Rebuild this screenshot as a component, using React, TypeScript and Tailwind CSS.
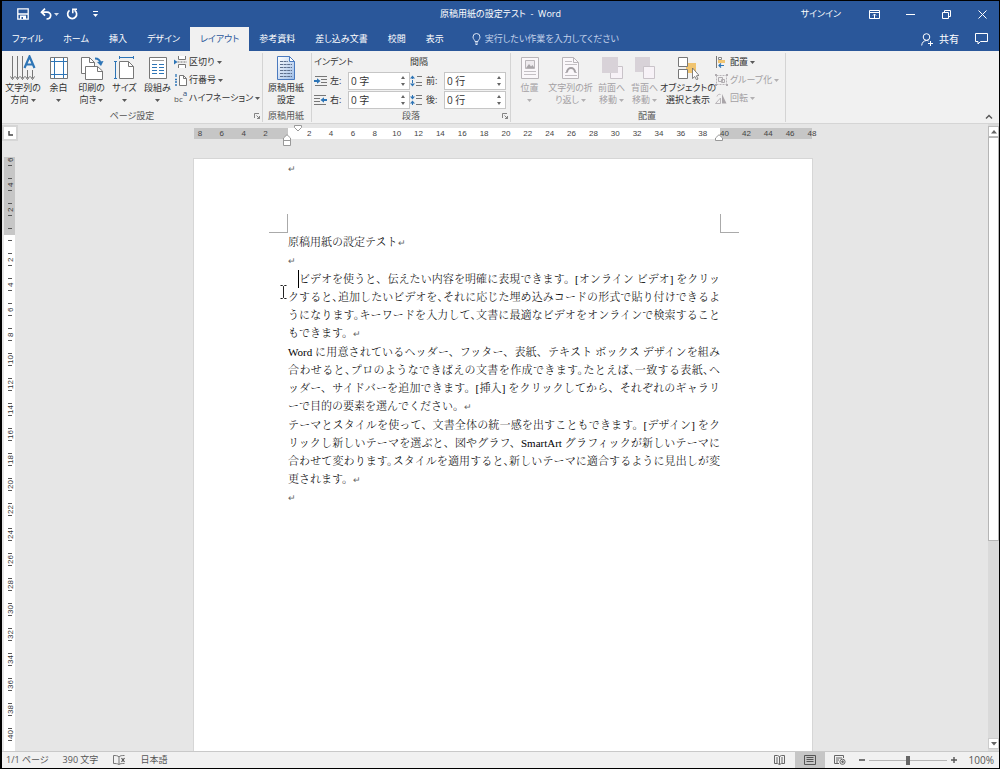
import React from 'react';

type IconProps = { children: React.ReactNode; w: number; h: number };

function Svg({ children, w, h }: IconProps) {
  return (
    <svg width={w} height={h} viewBox={`0 0 ${w} ${h}`} fill="none" aria-hidden="true" className="block shrink-0">
      {children}
    </svg>
  );
}

function Drop() {
  return (
    <svg width="5" height="3" viewBox="0 0 5 3" aria-hidden="true" className="ml-0.5 inline-block shrink-0 align-middle">
      <path d="M0 0h5L2.500 3z" fill="currentColor" opacity=".8" />
    </svg>
  );
}

/* ---------- ribbon icons ---------- */

const TextDirectionIcon = () => (
  <Svg w={26} h={26}>
    <path d="M2.500 1v22M7.500 1v22M12.500 1v22M17.500 15v8M22.500 15v8" stroke="#777" />
    <path d="M.5 21.500l2 3 2-3M5.500 21.500l2 3 2-3M10.500 21.500l2 3 2-3M15.500 21.500l2 3 2-3M20.500 21.500l2 3 2-3" stroke="#666" />
    <path d="M14.500 13L19.500 1.500 24.500 13M16 9.500h7" stroke="#2e75b6" strokeWidth="2.200" />
  </Svg>
);
const MarginsIcon = () => (
  <Svg w={20} h={24}>
    <path d="M1.500 1.500h17v21h-17z" fill="#fff" stroke="#777" />
    <path d="M5.500 2v20M14.500 2v20M2 5.500h16M2 18.500h16" stroke="#2e75b6" />
  </Svg>
);
const OrientationIcon = () => (
  <Svg w={24} h={24}>
    <path d="M1.500 1.500h8l5 5v11h-13z" fill="#fff" stroke="#777" />
    <path d="M9.500 1.500v5h5" stroke="#777" />
    <path d="M5.500 10.500h12l5 4.500v8.500h-17z" fill="#fff" stroke="#777" />
    <path d="M17.500 10.500v5h5" stroke="#777" />
    <path d="M15 2.500c3 0 5 1 5.500 5" stroke="#2e75b6" strokeWidth="1.800" />
    <path d="M17 6l4 4 2.500-5z" fill="#2e75b6" />
  </Svg>
);
const SizeIcon = () => (
  <Svg w={22} h={24}>
    <path d="M5.500 5.500h9l5 5v12h-14z" fill="#fff" stroke="#777" />
    <path d="M14.500 5.500v5h5" stroke="#777" />
    <path d="M5 1.500h15M5.500 0v3M19.500 0v3M1.500 5v18M0 5.500h3M0 22.500h3" stroke="#2e75b6" />
  </Svg>
);
const ColumnsIcon = () => (
  <Svg w={20} h={24}>
    <path d="M1.500 1.500h17v21h-17z" fill="#fff" stroke="#777" />
    <path d="M4 4.500h12" stroke="#999" />
    <path d="M4 8.500h5M4 11.500h5M4 14.500h5M4 17.500h5M11 8.500h5M11 11.500h5M11 14.500h5M11 17.500h5" stroke="#2e75b6" />
  </Svg>
);
const BreaksIcon = () => (
  <Svg w={13} h={12}>
    <path d="M4.500 0v3.500h7V0M4.500 12V8.500h7V12" fill="#fff" stroke="#777" />
    <path d="M3.500 6h9.500" stroke="#777" strokeDasharray="2 1" />
    <path d="M0 3.500L3.500 6 0 8.500z" fill="#2e75b6" />
  </Svg>
);
const LineNumbersIcon = () => (
  <Svg w={13} h={12}>
    <path d="M5.500 1.500h4l3 3v7h-7z" fill="#fff" stroke="#777" />
    <path d="M9.500 1.500v3h3" stroke="#777" />
    <path d="M2 0v3M1 5.500h2M1 8h2M1 11h2" stroke="#2e75b6" strokeWidth="1.300" />
  </Svg>
);
const GenkoIcon = () => (
  <Svg w={20} h={26}>
    <defs>
      <linearGradient id="genko" x1="0" y1="0" x2="1" y2="1">
        <stop offset="0" stopColor="#fff" />
        <stop offset="1" stopColor="#9dbce6" />
      </linearGradient>
    </defs>
    <path d="M1.500 1.500h12l5 5v18h-17z" fill="url(#genko)" stroke="#4a7abf" />
    <path d="M13.500 1.500v5h5z" fill="#fff" stroke="#4a7abf" />
    <path d="M4 6.500h8M4 9.500h12M4 12.500h12M4 15.500h12M4 18.500h12M4 21.500h12" stroke="#5d6f8c" strokeDasharray="3 .6" />
  </Svg>
);
const IndentIcon = ({ right }: { right?: boolean }) => (
  <Svg w={13} h={10}>
    <path d={right ? 'M0 .5h12M0 3.500h6M0 6.500h6M0 9.500h12' : 'M1 .5h12M7 3.500h6M7 6.500h6M1 9.500h12'} stroke="#777" />
    {right ? <path d="M13 5H8" stroke="#2e75b6" strokeWidth="2" /> : <path d="M0 5h4" stroke="#2e75b6" strokeWidth="2" />}
    <path d={right ? 'M10 2.200v5.600L6.500 5z' : 'M3 2.200v5.600L6.500 5z'} fill="#2e75b6" />
  </Svg>
);
const SpacingIcon = ({ after }: { after?: boolean }) => (
  <Svg w={13} h={12}>
    <path d={after ? 'M6 1.500h6M6 4.500h6M6 10.500h6' : 'M7 1.500h5M6 7.500h6M6 10.500h6'} stroke="#777" />
    <path d="M2.500 1v10" stroke="#2e75b6" strokeDasharray={after ? '4 2' : '3 1'} />
    <path d={after ? 'M0 2.500h5L2.500 5.500zM0 9.500h5L2.500 6.500z' : 'M0 3.500h5L2.500 .5zM0 8.500h5l-2.500 3z'} fill="#2e75b6" />
  </Svg>
);
const PositionIcon = () => (
  <Svg w={20} h={24}>
    <path d="M1.500 1.500h17v21h-17z" fill="#faf7fa" stroke="#b9b5b9" />
    <path d="M5.500 4.500h9v8h-9z" fill="#eeeaee" stroke="#b9b5b9" />
    <path d="M6 12l3-4 2 2.500 1.500-1.500 2 3z" fill="#a9a5a9" />
    <path d="M4 15.500h12M4 18.500h12" stroke="#c4c0c4" />
  </Svg>
);
const WrapIcon = () => (
  <Svg w={20} h={24}>
    <path d="M1.500 1.500h11l5 5v16h-16z" fill="#faf7fa" stroke="#b9b5b9" />
    <path d="M12.500 1.500v5h5" stroke="#b9b5b9" />
    <path d="M4 5.500h7M4 8.500h12M4 19.500h12M4 16.500h2M14 16.500h2" stroke="#c4c0c4" />
    <path d="M6 16.500c0-6 8-6 8 0" stroke="#a39fa3" strokeWidth="2" />
  </Svg>
);
const FrontIcon = () => (
  <Svg w={22} h={24}>
    <path d="M9.500 10.500h12v12h-12z" fill="#f7f2f7" stroke="#c9c3c9" />
    <path d="M1 1h16v16H1z" fill="#d8d2d8" />
  </Svg>
);
const BackIcon = () => (
  <Svg w={22} h={24}>
    <path d="M1 1h15v15H1z" fill="#d8d2d8" />
    <path d="M9.500 10.500h11v12h-11z" fill="#f7f2f7" stroke="#c9c3c9" />
  </Svg>
);
const SelectionPaneIcon = () => (
  <Svg w={22} h={24}>
    <path d="M9 7h10v10H9z" fill="#f0c470" />
    <path d="M1.500 1.500h9v9h-9zM1.500 13.500h9v9h-9z" fill="#fff" stroke="#777" />
    <path d="M15.500 12v10.500l2.300-2 1.700 3.300 1.500-.8-1.600-3.200 2.600-.4z" fill="#fff" stroke="#666" strokeWidth=".8" />
  </Svg>
);
const AlignIcon = () => (
  <Svg w={11} h={12}>
    <path d="M1.500 0v12" stroke="#777" />
    <path d="M3.500 1.500h3v2h-3z" fill="#fff" stroke="#888" />
    <path d="M3 4h7v3H3z" fill="#f0c470" />
    <path d="M9 9.500H4M6 7.500l-2 2 2 2" stroke="#2e75b6" strokeWidth="1.200" />
  </Svg>
);
const GroupIcon = () => (
  <Svg w={13} h={12}>
    <path d="M1.500 1.500h10v9h-10z" stroke="#b9b5b9" strokeDasharray="2 1" />
    <path d="M3.500 3.500h4v4h-4zM6.500 5.500h3v3h-3z" fill="#eee" stroke="#b0acb0" />
    <path d="M0 0h2v2H0zM11 0h2v2h-2zM0 10h2v2H0zM11 10h2v2h-2z" fill="#b0acb0" />
  </Svg>
);
const RotateIcon = () => (
  <Svg w={12} h={11}>
    <path d="M7 1l4.500 9.500H7z" fill="#a9a5a9" />
    <path d="M5.500 5v5.500H.5z" stroke="#b9b5b9" />
    <path d="M2 3.500C2.500 1.500 4 1 5.500 1.500" stroke="#b9b5b9" />
  </Svg>
);
const Launcher = () => (
  <button type="button" aria-label="ダイアログを開く" className="ml-auto">
    <Svg w={6} h={6}>
      <path d="M.5 5V.5H5M2.500 2.500l3 3M5.500 3v2.500H3" stroke="#777" strokeWidth=".9" />
    </Svg>
  </button>
);

/* ---------- ribbon parts ---------- */

type BigProps = { icon: React.ReactNode; lines: string[]; width: string; drop?: boolean; disabled?: boolean };

function BigButton({ icon, lines, width, drop = true, disabled }: BigProps) {
  const single = lines.length === 1;
  return (
    <button
      type="button"
      disabled={disabled}
      className={`flex shrink-0 flex-col items-center whitespace-nowrap leading-3 ${width} ${disabled ? 'text-[#a3a0a3]' : 'text-[#333]'}`}
    >
      <span className="flex h-[29px] items-center">{icon}</span>
      <span>{lines[0]}</span>
      <span className="flex h-3 items-center">
        {!single && lines[1]}
        {drop && (single ? <span className="-ml-0.5 flex"><Drop /></span> : <Drop />)}
      </span>
    </button>
  );
}

function SmallButton({ icon, label, disabled }: { icon: React.ReactNode; label: string; disabled?: boolean }) {
  return (
    <button
      type="button"
      disabled={disabled}
      className={`flex h-[18px] items-center whitespace-nowrap ${disabled ? 'text-[#a3a0a3]' : 'text-[#333]'}`}
    >
      <span className="flex w-[15px] shrink-0 justify-start">{icon}</span>
      {label}
      <Drop />
    </button>
  );
}

function Group({ label, children, launcher }: { label: string; children: React.ReactNode; launcher?: boolean }) {
  return (
    <section aria-label={label} className="flex shrink-0 flex-col border-r border-[#d4d4d4] pr-0.5">
      <div className="flex h-[57px] px-0.5">{children}</div>
      <div className="flex h-3 items-center leading-3 text-[#555]">
        <span className={launcher ? 'flex-1 pl-2 text-center' : 'flex-1 text-center'}>{label}</span>
        {launcher && <Launcher />}
      </div>
    </section>
  );
}

function Spin({ id, icon, label, value }: { id: string; icon: React.ReactNode; label: string; value: string }) {
  return (
    <div className="flex h-[18px] items-center">
      <span className="w-4">{icon}</span>
      <label htmlFor={id} className="w-[18px] whitespace-nowrap">{label}</label>
      <div className="flex h-[18px] w-[62px] items-center border border-[#c6c6c6] bg-white">
        <input id={id} defaultValue={value} className="w-0 flex-1 bg-transparent pl-0.5 text-[10px] outline-none" />
        <span className="flex flex-col gap-1 pr-1 text-[#666]">
          <button type="button" aria-label={`${label} 増やす`}>
            <Svg w={4} h={3}><path d="M0 3h4L2 0z" fill="currentColor" /></Svg>
          </button>
          <button type="button" aria-label={`${label} 減らす`}>
            <Svg w={4} h={3}><path d="M0 0h4L2 3z" fill="currentColor" /></Svg>
          </button>
        </span>
      </div>
    </div>
  );
}

function Ribbon() {
  return (
    <div className="flex h-[73px] shrink-0 border-b border-[#d5d5d5] bg-[#f1f1f1] pb-px pt-0.5">
      <Group label="ページ設定" launcher>
        <BigButton icon={<TextDirectionIcon />} lines={['文字列の', '方向']} width="w-[38px]" />
        <BigButton icon={<MarginsIcon />} lines={['余白']} width="w-[33px]" />
        <BigButton icon={<OrientationIcon />} lines={['印刷の', '向き']} width="w-[33px]" />
        <BigButton icon={<SizeIcon />} lines={['サイズ']} width="w-[33px]" />
        <BigButton icon={<ColumnsIcon />} lines={['段組み']} width="w-[33px]" />
        <div className="flex w-[84px] flex-col">
          <SmallButton icon={<BreaksIcon />} label="区切り" />
          <SmallButton icon={<LineNumbersIcon />} label="行番号" />
          <SmallButton
            icon={
              <span className="flex text-[8px] leading-none text-[#555]">
                <span className="pt-0.5">bc</span>
                <span className="-mt-1 text-[#2e4f7b]">a</span>
              </span>
            }
            label="ハイフネーション"
          />
        </div>
      </Group>
      <Group label="原稿用紙">
        <BigButton icon={<GenkoIcon />} lines={['原稿用紙', '設定']} width="w-[42px]" drop={false} />
      </Group>
      <Group label="段落" launcher>
        <div className="grid grid-cols-2 text-[#333]">
          <span className="flex h-[18px] items-center">インデント</span>
          <span className="flex h-[18px] items-center">間隔</span>
          <Spin id="left" icon={<IndentIcon />} label="左:" value="0 字" />
          <Spin id="before" icon={<SpacingIcon />} label="前:" value="0 行" />
          <Spin id="right" icon={<IndentIcon right />} label="右:" value="0 字" />
          <Spin id="after" icon={<SpacingIcon after />} label="後:" value="0 行" />
        </div>
      </Group>
      <Group label="配置">
        <BigButton disabled icon={<PositionIcon />} lines={['位置']} width="w-[33px]" />
        <BigButton disabled icon={<WrapIcon />} lines={['文字列の折', 'り返し']} width="w-[49px]" />
        <BigButton disabled icon={<FrontIcon />} lines={['前面へ', '移動']} width="w-[33px]" />
        <BigButton disabled icon={<BackIcon />} lines={['背面へ', '移動']} width="w-[33px]" />
        <BigButton icon={<SelectionPaneIcon />} lines={['オブジェクトの', '選択と表示']} width="w-[54px]" drop={false} />
        <div className="flex w-[66px] flex-col">
          <SmallButton icon={<AlignIcon />} label="配置" />
          <SmallButton disabled icon={<GroupIcon />} label="グループ化" />
          <SmallButton disabled icon={<RotateIcon />} label="回転" />
        </div>
      </Group>
      <button type="button" aria-label="リボンを折りたたむ" className="ml-auto mr-1.5 mt-auto pb-[3px]">
        <Svg w={8} h={5}><path d="M1 4.500l3-3 3 3" stroke="#555" strokeWidth="1.400" /></Svg>
      </button>
    </div>
  );
}

/* ---------- title bar and tabs ---------- */

function TitleBar() {
  return (
    <header className="grid h-[26px] shrink-0 grid-cols-[1fr_auto_1fr] items-center text-white">
      <div className="flex items-center pl-[15px]">
        <button type="button" aria-label="上書き保存">
          <Svg w={12} h={12}>
            <path d="M.8.8h10.400v10.400H.8zM1 6h10" stroke="#fff" strokeWidth="1.300" />
            <path d="M3 7.500h6V11H3z" fill="#fff" />
            <path d="M4.500 9h1.500v2H4.500z" fill="#2a579a" />
          </Svg>
        </button>
        <button type="button" aria-label="元に戻す" className="ml-[11px] flex items-center">
          <Svg w={12} h={12}>
            <path d="M1.500 4.200h5.500c5 0 5 6.600-.5 6.800" stroke="#fff" strokeWidth="1.700" />
            <path d="M5 .7L1.500 4.200 5 7.700" stroke="#fff" strokeWidth="1.700" />
          </Svg>
          <Drop />
        </button>
        <button type="button" aria-label="繰り返し" className="ml-[7px]">
          <Svg w={12} h={12}>
            <path d="M8.500 2.200A4.500 4.500 0 1 1 3.500 2.400" stroke="#fff" strokeWidth="1.700" />
            <path d="M6.800 5.200V1.200H11" stroke="#fff" strokeWidth="1.500" />
          </Svg>
        </button>
        <button type="button" aria-label="クイック アクセス ツール バーのカスタマイズ" className="ml-[15px]">
          <Svg w={5} h={6}>
            <path d="M0 .5h5" stroke="#fff" />
            <path d="M0 3h5L2.500 6z" fill="#fff" />
          </Svg>
        </button>
      </div>
      <h1 className="whitespace-pre">原稿用紙の設定テスト  -  Word</h1>
      <div className="flex items-center justify-end pr-3">
        <button type="button" className="mr-7">サインイン</button>
        <button type="button" aria-label="リボンの表示オプション" className="mr-[26px]">
          <Svg w={11} h={9}>
            <path d="M.5.500h10v8H.5zM1 2.500h9M5.500 8V4M4 5.500L5.500 4 7 5.500" stroke="#fff" />
          </Svg>
        </button>
        <button type="button" aria-label="最小化" className="mr-[27px]">
          <Svg w={9} h={9}><path d="M0 4.500h9" stroke="#fff" /></Svg>
        </button>
        <button type="button" aria-label="元に戻す (縮小)" className="mr-[27px]">
          <Svg w={9} h={9}><path d="M.5 2.500h6v6h-6zM2.500 2V.5h6v6H7" stroke="#fff" /></Svg>
        </button>
        <button type="button" aria-label="閉じる">
          <Svg w={9} h={9}><path d="M.5.500l8 8M8.500.500l-8 8" stroke="#fff" /></Svg>
        </button>
      </div>
    </header>
  );
}

const tabs = ['ファイル', 'ホーム', '挿入', 'デザイン', 'レイアウト', '参考資料', '差し込み文書', '校閲', '表示'];

function Tabs() {
  return (
    <nav aria-label="リボン タブ" className="flex h-6 shrink-0 items-stretch whitespace-nowrap text-white">
      {tabs.map((t) => (
        <button
          key={t}
          type="button"
          aria-current={t === 'レイアウト' ? 'page' : undefined}
          className={t === 'レイアウト' ? 'bg-[#f1f1f1] px-[10px] text-[#2a579a]' : 'px-[10px]'}
        >
          {t}
        </button>
      ))}
      <button type="button" className="ml-[18px] flex items-center gap-1 text-[#c3d2ea]">
        <Svg w={9} h={12}>
          <path d="M3 8.500C3 7 1 6.200 1 4a3.500 3.500 0 0 1 7 0c0 2.200-2 3-2 4.500zM3 10h3M3.500 11.500h2" stroke="#dbe5f4" />
        </Svg>
        実行したい作業を入力してください
      </button>
      <button type="button" className="ml-auto flex items-center gap-1.5 text-[10px]">
        <Svg w={12} h={13}>
          <circle cx="5.500" cy="4" r="3.300" stroke="#fff" />
          <path d="M.7 12.500C.8 9.500 3 7.500 5.500 7.500c1 0 1.500.2 2 .5M9.500 8v5M7 10.500h5" stroke="#fff" />
        </Svg>
        共有
      </button>
      <button type="button" aria-label="コメント" className="ml-4 mr-[11px]">
        <Svg w={13} h={12}>
          <path d="M.5.500h12v8H5.500l-2.500 2.500V8.500H.5z" stroke="#fff" />
        </Svg>
      </button>
    </nav>
  );
}

/* ---------- rulers ---------- */

const hMarks = Array.from({ length: 29 }, (_, i) => i * 2 - 8);
const vMarks = Array.from({ length: 24 }, (_, i) => i * 2 - 6);

function HorizontalRuler() {
  return (
    <div className="relative mx-auto flex h-[11px] w-[618px] text-[8px] leading-[11px] text-[#444]">
      <div className="w-[94px] bg-[#c6c6c6]" />
      <div className="flex-1 bg-white" />
      <div className="w-[92px] bg-[#c6c6c6]" />
      <div className="absolute -left-[5px] top-0 flex w-[634px] font-['Liberation_Sans',sans-serif]">
        {hMarks.map((n) => (
          <span key={n} className="w-0 flex-1 text-center">{n === 0 ? '' : Math.abs(n)}</span>
        ))}
      </div>
      <span className="absolute -top-[3px] left-[100px]">
        <Svg w={8} h={7}><path d="M.5.500h7v2L4 6 .5 2.500z" fill="#fff" stroke="#999" /></Svg>
      </span>
      <span className="absolute left-[89px] top-[6px]">
        <Svg w={8} h={12}><path d="M.5 11.500V4L4 .7 7.500 4v7.500zM.5 6.500h7" fill="#fff" stroke="#999" /></Svg>
      </span>
      <span className="absolute left-[521px] top-[6px]">
        <Svg w={8} h={7}><path d="M.5 6.500V4L4 .7 7.500 4v2.500z" fill="#fff" stroke="#999" /></Svg>
      </span>
    </div>
  );
}

function VerticalRuler() {
  return (
    <div className="relative ml-0.5 min-h-0 w-[11px] flex-1 overflow-hidden bg-white font-['Liberation_Sans',sans-serif] text-[8px] text-[#333]">
      <div className="h-[78px] bg-[#c6c6c6]" />
      <div className="absolute -top-[10px] left-0 flex w-full flex-col pl-px">
        {vMarks.map((n) => (
          <span key={n} className="flex h-[25px] flex-col items-center justify-center">
            <span className="h-px w-1 shrink-0 bg-[#555]" />
            <span className="flex h-[11px] shrink-0 rotate-180 items-center justify-center leading-[11px] [writing-mode:vertical-rl]">
              {n === 0 ? '' : Math.abs(n)}
            </span>
            <span className="h-px w-1 shrink-0 bg-[#555]" />
          </span>
        ))}
      </div>
    </div>
  );
}

/* ---------- document ---------- */

function Mark() {
  return <span className="font-['DejaVu_Sans',sans-serif] text-[9px] leading-none text-[#666]">↵</span>;
}

type LineProps = { children: React.ReactNode; className?: string; tight?: boolean };

/* A full line of body text; tight lines use half-width punctuation. */
function Full({ children, className = '', tight }: LineProps) {
  return (
    <span
      className={`block whitespace-nowrap [text-align-last:justify] ${tight ? "[font-feature-settings:'halt']" : ''} ${className}`}
    >
      {children}
    </span>
  );
}

function Page() {
  return (
    <article className="relative mx-auto flex w-[620px] flex-1 flex-col border border-b-0 border-[#d6d6d6] bg-white text-[11px] font-light leading-[18px] text-black [font-family:'Liberation_Serif','Noto_Serif_CJK_JP','Noto_Sans_CJK_JP',serif] [font-feature-settings:normal]">
      <header className="h-[55px] pl-[94px]"><Mark /></header>
      <div className="flex justify-between pl-[75px] pr-[73px]">
        <span className="size-[19px] border-b border-r border-[#aaa]" />
        <span className="size-[19px] border-b border-l border-[#aaa]" />
      </div>
      <div className="flex flex-col gap-px pl-[94px] pr-[92px]">
        <div>
          <p className="h-[18px]">原稿用紙の設定テスト<Mark /></p>
          <p className="h-[18px]"><Mark /></p>
        </div>
        <p className="h-[72px]">
          <Full className="relative pl-[11px]">
            <span className="absolute left-[10px] top-0 h-[18px] w-px bg-black" />
            ビデオを使うと、伝えたい内容を明確に表現できます。[オンライン ビデオ] をクリッ
          </Full>
          <Full tight>クすると、追加したいビデオを、それに応じた埋め込みコードの形式で貼り付けできるよ</Full>
          <Full tight>うになります。キーワードを入力して、文書に最適なビデオをオンラインで検索すること</Full>
          もできます。<Mark />
        </p>
        <p className="h-[72px]">
          <Full>Word に用意されているヘッダー、フッター、表紙、テキスト ボックス デザインを組み</Full>
          <Full tight>合わせると、プロのようなできばえの文書を作成できます。たとえば、一致する表紙、ヘ</Full>
          <Full>ッダー、サイドバーを追加できます。[挿入] をクリックしてから、それぞれのギャラリ</Full>
          ーで目的の要素を選んでください。<Mark />
        </p>
        <div>
          <p className="h-[72px]">
            <Full>テーマとスタイルを使って、文書全体の統一感を出すこともできます。[デザイン] をク</Full>
            <Full>リックし新しいテーマを選ぶと、図やグラフ、SmartArt グラフィックが新しいテーマに</Full>
            <Full tight>合わせて変わります。スタイルを適用すると、新しいテーマに適合するように見出しが変</Full>
            更されます。<Mark />
          </p>
          <p className="h-[18px]"><Mark /></p>
        </div>
      </div>
      <span className="absolute left-[86px] top-[126px]">
        <Svg w={7} h={14}><path d="M.5.500h2l1 1 1-1h2M3.500 1.500v11M.5 13.500h2l1-1 1 1h2" stroke="#222" /></Svg>
      </span>
    </article>
  );
}

function ScrollBar() {
  return (
    <div className="flex w-[11px] shrink-0 flex-col bg-[#dadada] pb-[2px] pt-[2px]">
      <button type="button" aria-label="上へスクロール" className="flex h-[11px] items-center justify-center border border-[#bbb] bg-white">
        <Svg w={6} h={4}><path d="M0 3.500h6L3 0z" fill="#666" /></Svg>
      </button>
      <div className="h-[404px] border border-[#b5b5b5] bg-white" />
      <button type="button" aria-label="下へスクロール" className="mt-auto flex h-[11px] items-center justify-center border border-[#ccc] bg-white">
        <Svg w={6} h={4}><path d="M0 0h6L3 3.500z" fill="#666" /></Svg>
      </button>
    </div>
  );
}

/* ---------- status bar ---------- */

function StatusBar() {
  return (
    <footer className="flex h-[17px] shrink-0 items-stretch whitespace-nowrap border-t border-[#c9c9c9] bg-[#f1f1f1] text-[#555]">
      <span className="flex items-center pl-1">1/1 ページ</span>
      <span className="ml-[14px] flex items-center">390 文字</span>
      <button type="button" aria-label="文章校正" className="ml-[15px]">
        <Svg w={13} h={10}>
          <path d="M6 2v7.500C4.500 8.500 2.500 8.500.5 8.500v-8c2 0 4.500 0 5.500 1.500zM6 2C7 .5 9 .5 11.500.5M6 9.500c1-1 3-1 5.500-1" stroke="#777" />
          <path d="M8.500 3l3 4M11.500 3l-3 4" stroke="#555" strokeWidth="1.200" />
        </Svg>
      </button>
      <button type="button" className="ml-[14px]">日本語</button>
      <div className="ml-auto flex items-stretch">
        <button type="button" aria-label="閲覧モード" className="px-[10px]">
          <Svg w={11} h={10}>
            <path d="M5.500 1.500v8M.5.500h3l2 1 2-1h3v8h-3l-2 1-2-1h-3zM2 3h2M2 5h2M2 7h2M7 3h2M7 5h2M7 7h2" stroke="#666" />
          </Svg>
        </button>
        <button type="button" aria-label="印刷レイアウト" className="bg-[#c6c6c6] px-[9px]">
          <Svg w={12} h={10}>
            <path d="M.5.500h11v9H.5zM2.500 2.500h7M2.500 4.500h7M2.500 6.500h7" stroke="#555" />
          </Svg>
        </button>
        <button type="button" aria-label="Web レイアウト" className="px-[9px]">
          <Svg w={12} h={10}>
            <path d="M5 8.500H.5v-8h9V3M2 3h6M2 5h3M2 7h2" stroke="#666" />
            <circle cx="8.500" cy="6.800" r="2.600" fill="#f1f1f1" stroke="#666" />
            <path d="M7 6.500l2-1.500 1 2-1.500 1.500z" fill="#666" />
          </Svg>
        </button>
        <button type="button" aria-label="縮小" className="ml-1 pr-1">
          <Svg w={6} h={6}><path d="M0 3h6" stroke="#555" strokeWidth="1.600" /></Svg>
        </button>
        <input
          type="range"
          aria-label="ズーム"
          min={0}
          max={100}
          defaultValue={50}
          className="my-auto h-px w-[78px] appearance-none bg-[#b5b5b5] [&::-webkit-slider-thumb]:h-[9px] [&::-webkit-slider-thumb]:w-[4px] [&::-webkit-slider-thumb]:appearance-none [&::-webkit-slider-thumb]:bg-[#666]"
        />
        <button type="button" aria-label="拡大" className="px-1">
          <Svg w={6} h={6}><path d="M0 3h6M3 0v6" stroke="#555" strokeWidth="1.400" /></Svg>
        </button>
        <button type="button" className="ml-2 mr-[5px] text-[10px]">100%</button>
      </div>
    </footer>
  );
}

export default function App() {
  return (
    <div className="flex h-screen flex-col overflow-hidden border border-l-2 border-black bg-[#e6e6e6] text-[9px] leading-4 [font-family:'Open_Sans','Noto_Sans_CJK_JP',sans-serif] [font-feature-settings:'palt']">
      <div className="bg-[#2a579a]">
        <TitleBar />
        <Tabs />
      </div>
      <Ribbon />
      <main className="flex min-h-0 flex-1">
        <div className="flex w-4 shrink-0 flex-col">
          <button type="button" aria-label="タブの種類" className="mb-4 mt-px flex h-4 items-center justify-center border-2 border-[#d6d6d6] bg-white">
            <Svg w={5} h={5}><path d="M1 0v4h4" stroke="#444" strokeWidth="1.400" /></Svg>
          </button>
          <VerticalRuler />
        </div>
        <div className="flex min-w-0 flex-1 flex-col">
          <div className="h-[34px] shrink-0 pt-1">
            <HorizontalRuler />
          </div>
          <Page />
        </div>
        <ScrollBar />
      </main>
      <StatusBar />
    </div>
  );
}
